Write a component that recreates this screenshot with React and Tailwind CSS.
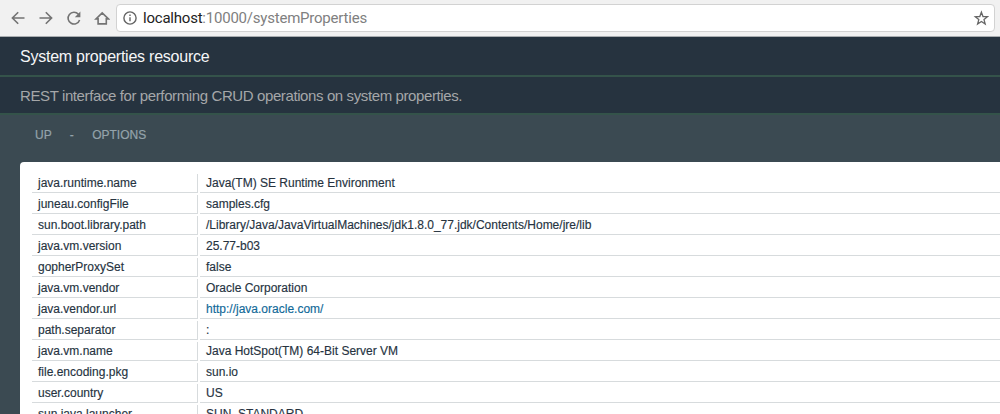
const rows = [
  ["java.runtime.name", "Java(TM) SE Runtime Environment"],
  ["juneau.configFile", "samples.cfg"],
  ["sun.boot.library.path", "/Library/Java/JavaVirtualMachines/jdk1.8.0_77.jdk/Contents/Home/jre/lib"],
  ["java.vm.version", "25.77-b03"],
  ["gopherProxySet", "false"],
  ["java.vm.vendor", "Oracle Corporation"],
  ["java.vendor.url", "http://java.oracle.com/"],
  ["path.separator", ":"],
  ["java.vm.name", "Java HotSpot(TM) 64-Bit Server VM"],
  ["file.encoding.pkg", "sun.io"],
  ["user.country", "US"],
  ["sun.java.launcher", "SUN_STANDARD"],
];

function Icon({ children, className = "", strokeWidth = 1.6 }) {
  return (
    <svg viewBox="0 0 16 16" className={`size-4 shrink-0 ${className}`} fill="none" stroke="currentColor" strokeWidth={strokeWidth}>
      {children}
    </svg>
  );
}

function BrowserBar() {
  return (
    <header className="flex h-[37px] shrink-0 items-center border-b border-[#a9adb0] bg-[#f1f1f1] pr-[5px] pl-[10px] text-[#737373]">
      <div className="flex gap-3">
        <Icon><path d="M14.5 8H2.6M8.2 2.2 2.4 8l5.8 5.8" /></Icon>
        <Icon><path d="M1.5 8h11.9M7.8 2.2 13.6 8l-5.8 5.8" /></Icon>
        <Icon>
          <path d="M13.6 10A5.9 5.9 0 1 1 12.4 4.2" />
          <path d="M14.4 1.6v5.6H8.8z" fill="currentColor" stroke="none" />
        </Icon>
        <Icon><path d="M2 8.9h2.1v5h8.2v-5h2.1L8.2 2.9z" /></Icon>
      </div>
      <div className="ml-[6px] flex h-7 grow items-center rounded-[4px] border border-[#d2d2d2] bg-white px-[5px]">
        <Icon className="text-[#646464]" strokeWidth={1.4}>
          <circle cx="8" cy="8" r="6.1" />
          <path d="M8 7.2v4M8 4.4v1.5" />
        </Icon>
        <span className="ml-[5px] grow font-[Roboto,sans-serif] text-[15px] leading-5 tracking-[-0.22px] text-[#808080]">
          <span className="text-[#222]">localhost</span>:10000/systemProperties
        </span>
        <Icon className="text-[#666]" strokeWidth={1.3}>
          <path d="m8.4 2.2 1.6 4.3 4.5.2-3.5 2.9 1.2 4.4-3.8-2.5L4.6 14l1.2-4.4-3.5-2.9 4.5-.2z" />
        </Icon>
      </div>
    </header>
  );
}

export default function App() {
  return (
    <div className="flex h-[414px] w-[1000px] flex-col overflow-hidden bg-[#3b4a52] font-['Liberation_Sans',Arial,sans-serif]">
      <BrowserBar />
      <h1 className="flex h-10 shrink-0 items-center border-b-2 border-[#34534a] bg-[#26333f] pt-[2px] pl-5 text-[16px] tracking-[-0.24px] text-[#f5f6f7]">
        System properties resource
      </h1>
      <h2 className="flex h-[38px] shrink-0 items-center border-b-2 border-[#34534a] bg-[#26333f] pt-[3px] pl-5 text-[15px] tracking-[-0.39px] text-[#a5a7a9]">
        REST interface for performing CRUD operations on system properties.
      </h2>
      <nav className="flex h-[47px] shrink-0 items-center pb-[7px] pl-[35px] text-[12px] text-[#94a3ab] [-webkit-text-stroke:0.2px]">
        <a>UP</a>
        <span className="mr-[18.5px] ml-[18px]">-</span>
        <a>OPTIONS</a>
      </nav>
      <main className="ml-5 grow rounded-tl-[4px] bg-white pt-3 pl-3">
        {rows.map(([name, value]) => (
          <div key={name} className="mb-[2px] flex h-[19px] gap-[2px] text-[12px] leading-[18px] text-[#26333f] [-webkit-text-stroke:0.15px]">
            <div className="w-[166px] shrink-0 border-r border-b border-[#d7dbdd] pl-[6px]">{name}</div>
            <div className="grow border-b border-[#d7dbdd] pl-[6px] whitespace-nowrap">
              {value.startsWith("http") ? <a className="text-[#116998]">{value}</a> : value}
            </div>
          </div>
        ))}
      </main>
    </div>
  );
}
